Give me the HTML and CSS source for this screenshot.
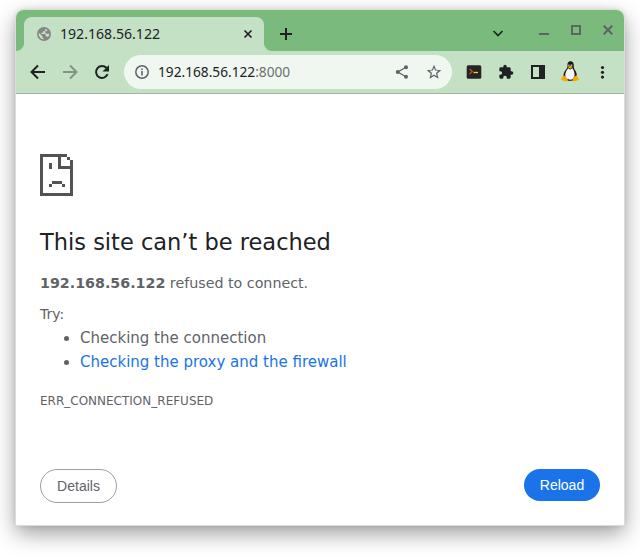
FILE: index.html
```html
<!DOCTYPE html>
<html lang="en">
<head>
<meta charset="utf-8">
<title>192.168.56.122</title>
<link rel="stylesheet" href="styles.css">
</head>
<body>
<div class="window">
  <header class="titlebar">
    <div class="tab">
      <svg class="globe" width="16" height="16" viewBox="0 0 24 24"><circle cx="12" cy="12" r="10.500" fill="#858585"/><path fill="#c5e1c5" d="M4 10l5.500 5v1.500c0 1 .8 1.800 1.800 1.800V20C7 19.600 3.700 16 4 10zM14 4.200V6c0 1-.9 1.700-1.800 1.700h-1.700v1.600c0 .5-.4 1-1 1H8V12h5.500c.6 0 1 .5 1 1v2.500h1.200c.9 0 1.700.6 1.900 1.400 1.600-1.600 2.400-3.400 2.300-5.400h-4.400l-2-2V8h2.200l1.800-1.700C15.800 5.200 15 4.600 14 4.200z"/></svg>
      <span class="tab-title">192.168.56.122</span>
      <svg class="tab-close" width="10" height="10" viewBox="0 0 10 10"><path d="M1.500 1.500l7 7M8.500 1.500l-7 7" stroke="#202124" stroke-width="1.700"/></svg>
    </div>
    <svg class="new-tab" width="12" height="12" viewBox="0 0 12 12"><path d="M6 0v12M0 6h12" stroke="#202124" stroke-width="2"/></svg>
    <div class="controls">
      <svg width="12" height="12" viewBox="0 0 12 12"><path d="M1.500 4L6 8.500 10.500 4" fill="none" stroke="#202124" stroke-width="1.700"/></svg>
      <svg width="10" height="12" viewBox="0 0 10 12"><path d="M0 10h10" stroke="#5f6368" stroke-width="2"/></svg>
      <svg width="10" height="12" viewBox="0 0 10 12"><path d="M1 2h8v8H1z" fill="none" stroke="#5f6368" stroke-width="2"/></svg>
      <svg width="10" height="12" viewBox="0 0 10 12"><path d="M.7 1.700l8.600 8.600M9.300 1.700L.7 10.300" stroke="#5f6368" stroke-width="2"/></svg>
    </div>
  </header>
  <nav class="toolbar">
    <svg width="16" height="16" viewBox="0 0 16 16"><path d="M15 8H2.500M8 1.500L1.500 8 8 14.500" fill="none" stroke="#202124" stroke-width="2"/></svg>
    <svg width="16" height="16" viewBox="0 0 16 16"><path d="M1 8h12.500M8 1.500L14.500 8 8 14.500" fill="none" stroke="#829483" stroke-width="2"/></svg>
    <svg width="16" height="16" viewBox="0 0 16 16"><path d="M13.600 10.200A6 6 0 1 1 12.600 4" fill="none" stroke="#202124" stroke-width="2"/><path d="M15 1v6.500H8.500z" fill="#202124"/></svg>
    <div class="address">
      <svg width="16" height="16" viewBox="0 0 16 16"><circle cx="8" cy="8" r="6.200" fill="none" stroke="#5f6368" stroke-width="1.500"/><path d="M7.200 7h1.600v4.500H7.200zM7.200 4.500h1.600V6H7.200z" fill="#5f6368"/></svg>
      <span class="url">192.168.56.122<span class="port">:8000</span></span>
      <svg class="share" width="16" height="16" viewBox="0 0 16 16"><path d="M12 3.200L3.800 8l8.200 4.800" fill="none" stroke="#5f6368" stroke-width="1.300"/><circle cx="12" cy="3.200" r="2" fill="#5f6368"/><circle cx="3.800" cy="8" r="2" fill="#5f6368"/><circle cx="12" cy="12.800" r="2" fill="#5f6368"/></svg>
      <svg width="16" height="16" viewBox="0 0 24 24"><path fill="#5f6368" d="M23 9.200l-7.900-.7L12 1.200 8.900 8.500 1 9.200l6 5.200-1.800 7.700 6.800-4.100 6.800 4.100-1.800-7.700zM12 15.700l-4.100 2.500L9 13.500l-3.600-3.200 4.800-.4L12 5.500l1.800 4.400 4.800.4-3.600 3.200 1.100 4.700z"/></svg>
    </div>
    <div class="extensions">
      <svg width="16" height="16" viewBox="0 0 16 16"><rect x=".7" y="1.200" width="14.600" height="13.600" rx="1.500" fill="#242424"/><path d="M3.500 5L6.300 7.600l-2.800 2.600" fill="none" stroke="#e4512c" stroke-width="1.100"/><path d="M7.500 8.500H12" stroke="#ffc425" stroke-width="1.300"/></svg>
      <svg width="16" height="16" viewBox="0 0 24 24"><path fill="#202124" d="M20.500 11H19V7c0-1.100-.9-2-2-2h-4V3.500a2.500 2.500 0 0 0-5 0V5H4c-1.100 0-2 .9-2 2v3.800h1.500a2.700 2.700 0 0 1 0 5.400H2V20c0 1.100.9 2 2 2h3.800v-1.500a2.700 2.700 0 0 1 5.400 0V22H17c1.100 0 2-.9 2-2v-4h1.500a2.500 2.500 0 0 0 0-5z"/></svg>
      <svg width="16" height="16" viewBox="0 0 16 16"><path fill="#202124" fill-rule="evenodd" d="M1 1h14v14H1zM3 3v10h6V3z"/></svg>
      <svg width="18" height="22" viewBox="0 0 18 22"><path fill="#171717" d="M9.500.3C7.200.3 6.300 2 6.500 4.200 6.700 6.800 5.800 7.500 4.300 9.500c-1.300 2-2.300 4.500-1.800 7l3 3.300h7.200l3-3.300c.5-2.500-.2-5-1.500-7-1.300-2-1.500-3-1.400-5.300C12.700 1.700 11.500.3 9.500.3z"/><path fill="#f4f4f4" d="M7.200 7.300C6.200 9 4.300 11 4.200 14c0 3 2.200 4.700 4.800 4.700s4.600-1.700 4.600-4.700c0-3-1-4.700-2-6.700L9 8.500z"/><path fill="#ccc" d="M7.300 3.600h1.200v1.600H7.300zM9.700 3.500h1.500v1.700H9.700z"/><path fill="#f9a800" d="M6.700 6l2.500-1.200L11.800 6 9.200 7.700zM2.800 14.300l2 1.700 2.200 3c-.3 2.200-2.500 1.500-6.800-.2.200-2 1.200-3.500 2.600-4.500zM15.200 14.300l-2 1.700-2 3c.3 2.200 2.500 1.500 6.600-.2-.2-2-1.200-3.500-2.600-4.500z"/></svg>
      <svg width="16" height="16" viewBox="0 0 16 16" fill="#202124"><circle cx="8.500" cy="3.500" r="1.600"/><circle cx="8.500" cy="8.300" r="1.600"/><circle cx="8.500" cy="13.100" r="1.600"/></svg>
    </div>
  </nav>
  <main class="page">
    <svg class="sad-file" width="33" height="42" viewBox="0 0 33 42" shape-rendering="crispEdges"><path fill="#535353" fill-rule="evenodd" d="M0 0h27v3h3v3h3v36H0zM3 3v36h27V15H18V3zM21 3v9h9V6h-3V3z"/><path fill="#535353" d="M9 9h3v6H9zM12 27h10v3H12zM9 30h3v3H9zM22 30h3v3h-3z"/></svg>
    <h1>This site can’t be reached</h1>
    <p class="summary"><strong>192.168.56.122</strong> refused to connect.</p>
    <p class="try">Try:</p>
    <ul>
      <li>Checking the connection</li>
      <li><a>Checking the proxy and the firewall</a></li>
    </ul>
    <p class="code">ERR_CONNECTION_REFUSED</p>
    <div class="buttons">
      <button class="details">Details</button>
      <button class="reload">Reload</button>
    </div>
  </main>
</div>
</body>
</html>
```

FILE: styles.css
```css
* { box-sizing: border-box; }
html { background: #fff; }
body {
  display: flow-root;
  height: 557px;
  margin: 0;
  overflow: hidden;
  font-family: "DejaVu Sans", sans-serif;
}
svg { display: block; flex: none; }
.window {
  width: 608px;
  height: 515px;
  margin: 10px 16px 0;
  border-radius: 8px 8px 0 0;
  background: #fff;
  box-shadow: 0 0 0 1px #dcded2, 0 8px 22px rgba(0, 0, 0, .4), 0 0 6px rgba(0, 0, 0, .12);
}
.titlebar {
  display: flex;
  align-items: center;
  height: 41px;
  padding-left: 8px;
  background: #7abb7d;
  border-radius: 8px 8px 0 0;
}
.tab {
  position: relative;
  display: flex;
  align-items: center;
  align-self: flex-end;
  width: 240px;
  height: 34px;
  padding: 0 11px 0 12px;
  background: #c5e1c5;
  border-radius: 8px 8px 0 0;
}
.tab::before, .tab::after {
  content: "";
  position: absolute;
  bottom: 0;
  width: 8px;
  height: 8px;
}
.tab::before { left: -8px; background: radial-gradient(circle at 0 0, transparent 7.5px, #c5e1c5 8.500px); }
.tab::after { right: -8px; background: radial-gradient(circle at 100% 0, transparent 7.5px, #c5e1c5 8.500px); }
.tab-title { margin-left: 8px; font: 14.100px/20px "Noto Sans", sans-serif; color: #202124; }
.tab-close { margin-left: auto; }
.new-tab { margin: 7px 0 0 16px; }
.controls { display: flex; gap: 22px; margin: 2px 11px 0 auto; }
.controls svg:first-child { margin: 3px 13px 0 0; }
.toolbar {
  display: flex;
  align-items: center;
  gap: 16px;
  height: 43px;
  padding: 0 14px;
  background: #c5e1c5;
  border-bottom: 1px solid #a0b5a0;
}
.address {
  display: flex;
  align-items: center;
  width: 328px;
  height: 34px;
  margin-left: -2px;
  padding: 0 10px;
  border-radius: 17px;
  background: #f0f7f0;
}
.url { margin-left: 8px; font: 13.700px/20px "Noto Sans", sans-serif; color: #202124; }
.port { color: #6b706d; }
.share { margin: 0 16px 0 auto; }
.extensions { display: flex; align-items: center; gap: 16px; margin-left: -2px; }
.extensions svg:nth-child(4) { margin: 0 -1px; }
.page { padding: 60px 24px 0; color: #5f6368; }
h1 { margin: 30px 0 0; font-size: 22.500px; font-weight: 400; line-height: 32px; color: #202124; }
p { margin: 0; }
.summary { margin-top: 15px; font-size: 14.250px; line-height: 20px; }
.try { margin-top: 11px; font-size: 14px; line-height: 20px; }
ul { margin: 2px 0 0; padding-left: 40px; font-size: 15px; line-height: 24px; }
a { color: #1a73e8; }
.code { margin-top: 17px; font-size: 12px; line-height: 20px; }
.buttons { display: flex; align-items: flex-start; justify-content: space-between; margin-top: 58px; }
button { padding: 0; font: 14px/17px "Liberation Sans", sans-serif; border-radius: 17px; }
.details { width: 77px; height: 34px; color: #5f6368; background: #fff; border: 1px solid #9aa0a6; }
.reload { width: 76px; height: 32px; color: #fff; background: #1a73e8; border: 0; }
```
